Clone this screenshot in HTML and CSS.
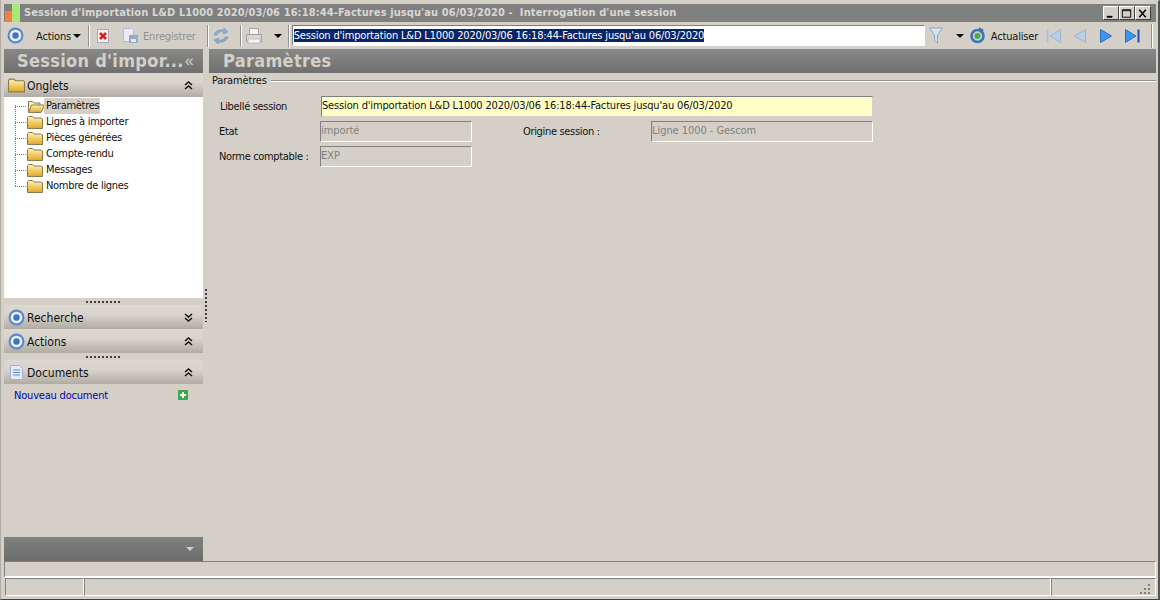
FILE: index.html
```html
<!DOCTYPE html>
<html lang="fr">
<head>
<meta charset="utf-8">
<title>Interrogation d'une session</title>
<link rel="stylesheet" href="styles.css">
</head>
<body>
<svg class="defs" width="0" height="0" aria-hidden="true">
  <defs>
    <linearGradient id="fold" x1="0" y1="0" x2="0" y2="1"><stop offset="0" stop-color="#fff3b8"/><stop offset="1" stop-color="#e0a820"/></linearGradient>
    <symbol id="folder" viewBox="0 0 16 13"><path d="M.5 12.500V1.500l1-1h4l1.500 1.500h7.500l1 1v9.500z" fill="url(#fold)" stroke="#8a7a50"/></symbol>
    <symbol id="folder-open" viewBox="0 0 18 13"><path d="M1.500 12.500V1.500h4l1.500 1.500h6v2" fill="#fff0b0" stroke="#8a7a50"/><path d="M1.500 12.500l3-7.500h13l-3.500 7.500z" fill="url(#fold)" stroke="#8a7a50"/></symbol>
    <symbol id="target" viewBox="0 0 16 16"><circle cx="8" cy="8" r="6.500" fill="#e8eefa" stroke="#5a88cc" stroke-width="2"/><circle cx="8" cy="8" r="3" fill="#3f72c8"/></symbol>
    <symbol id="updown" viewBox="0 0 9 9"><path d="M1 4l3.500-3L8 4M1 8l3.500-3L8 8" fill="none" stroke="#111" stroke-width="1.500"/></symbol>
    <symbol id="downdown" viewBox="0 0 9 9"><path d="M1 1l3.500 3L8 1M1 5l3.500 3L8 5" fill="none" stroke="#111" stroke-width="1.500"/></symbol>
  </defs>
</svg>
<div class="window">
  <header class="titlebar">
    <svg class="app-icon" width="18" height="18" viewBox="0 0 18 18"><rect width="18" height="18" fill="#808080"/><rect x="1" y="7" width="8" height="11" fill="#f08040"/><rect x="8" y="0" width="8" height="18" fill="#a8e878"/></svg>
    <span class="title-text">Session d'importation L&amp;D L1000 2020/03/06 16:18:44-Factures jusqu'au 06/03/2020 -&nbsp; Interrogation d'une session</span>
    <div class="win-btns">
      <span class="win-btn"><svg width="15" height="13" viewBox="0 0 15 13"><rect x="3" y="9" width="6" height="2" fill="#000"/></svg></span>
      <span class="win-btn"><svg width="15" height="13" viewBox="0 0 15 13"><path d="M2.500 2.500h9v8h-9zM2.500 3.500h9" fill="none" stroke="#000"/></svg></span>
      <span class="win-btn"><svg width="15" height="13" viewBox="0 0 15 13"><path d="M3.500 2.500l7 8M10.500 2.500l-7 8" stroke="#000" stroke-width="1.600"/></svg></span>
    </div>
  </header>

  <nav class="toolbar">
    <svg class="tb-target" width="17" height="17"><use href="#target"/></svg>
    <span class="tb-actions">Actions</span><span class="caret"></span>
    <span class="sep sep-a"></span>
    <svg class="tb-close" width="16" height="16" viewBox="0 0 16 16"><path d="M2.500 1.500h11v13h-11z" fill="#f4f0f0" stroke="#a8a8b8"/><path d="M5 5l6 6M11 5l-6 6" stroke="#d82020" stroke-width="2.600"/></svg>
    <svg class="tb-save" width="17" height="17" viewBox="0 0 17 17"><path d="M1.500 1.500h8l2 2v11h-10z" fill="#e8ecf6" stroke="#b4bccc"/><rect x="7" y="8" width="9" height="8" fill="#9aa8c8"/><rect x="9" y="12" width="5" height="3" fill="#e4e8f0"/></svg>
    <span class="tb-disabled">Enregistrer</span>
    <span class="sep sep-c"></span>
    <svg class="tb-sync" width="18" height="18" viewBox="0 0 18 18"><path d="M2 8q2-6 9-5l1-2 4 4-5 2 1-2q-5-1-7 3z" fill="#8fb0d8" stroke="#7088a8" stroke-width=".5"/><path d="M16 10q-2 6-9 5l-1 2-4-4 5-2-1 2q5 1 7-3z" fill="#88a8cc" stroke="#7088a8" stroke-width=".5"/></svg>
    <span class="sep sep-d"></span>
    <svg class="tb-print" width="18" height="18" viewBox="0 0 18 18"><path d="M4.500 1.500h9v6h-9z" fill="#f4f4f4" stroke="#a8a8a8"/><path d="M1.500 7.500h15v7h-15z" fill="#d8d8d8" stroke="#a0a0a0"/><rect x="3" y="12" width="12" height="4" fill="#f4f4f4" stroke="#a8a8a8" stroke-width=".6"/></svg>
    <span class="caret caret-print"></span>
    <span class="sep sep-e"></span>
    <div class="search-box"><span class="selected">Session d'importation L&amp;D L1000 2020/03/06 16:18:44-Factures jusqu'au 06/03/2020</span></div>
    <svg class="tb-filter" width="14" height="17" viewBox="0 0 14 17"><path d="M.5 1h13L8.500 8v8l-3-2.500V8z" fill="#d8e2ee" stroke="#8fa8c8"/></svg>
    <span class="caret caret-filter"></span>
    <svg class="tb-refresh" width="17" height="17" viewBox="0 0 17 17"><circle cx="8.500" cy="9" r="6" fill="none" stroke="#3f72b8" stroke-width="2.600"/><circle cx="8.500" cy="9" r="3" fill="#40b040"/><path d="M10 0l5 3-4 3z" fill="#3f72b8"/></svg>
    <span class="tb-refresh-label">Actualiser</span>
    <svg class="nav-icon nav-first" width="16" height="16" viewBox="0 0 16 16"><path d="M1.500 1.500v13" stroke="#a8c0dc" stroke-width="2"/><path d="M14.500 1.500v13L4 8z" fill="#b8cfe8" stroke="#98b4d4"/></svg>
    <svg class="nav-icon nav-prev" width="14" height="16" viewBox="0 0 14 16"><path d="M12.500 1.500v13L1.500 8z" fill="#b8cfe8" stroke="#98b4d4"/></svg>
    <svg class="nav-icon nav-next" width="14" height="16" viewBox="0 0 14 16"><path d="M1.500 1.500v13L12.500 8z" fill="#3d96f0" stroke="#2c6cc0"/></svg>
    <svg class="nav-icon nav-last" width="16" height="16" viewBox="0 0 16 16"><path d="M14.500 1.500v13" stroke="#1c50b0" stroke-width="2"/><path d="M1.500 1.500v13L12 8z" fill="#3d96f0" stroke="#2c6cc0"/></svg>
    <span class="sep sep-end"></span>
  </nav>

  <div class="workspace">
    <aside class="side">
      <div class="banner side-banner"><span class="banner-text">Session d'impor...</span><span class="collapse">«</span></div>

      <div class="panel-head">
        <svg class="ph-icon" width="17" height="15"><use href="#folder"/></svg>
        <span class="ph-label">Onglets</span>
        <svg class="ph-chev" width="9" height="9"><use href="#updown"/></svg>
      </div>
      <ul class="tree">
        <li class="tree-item"><svg class="tree-folder" width="18" height="13"><use href="#folder-open"/></svg><span class="tree-label active">Paramètres</span></li>
        <li class="tree-item"><svg class="tree-folder" width="16" height="13"><use href="#folder"/></svg><span class="tree-label">Lignes à importer</span></li>
        <li class="tree-item"><svg class="tree-folder" width="16" height="13"><use href="#folder"/></svg><span class="tree-label">Pièces générées</span></li>
        <li class="tree-item"><svg class="tree-folder" width="16" height="13"><use href="#folder"/></svg><span class="tree-label">Compte-rendu</span></li>
        <li class="tree-item"><svg class="tree-folder" width="16" height="13"><use href="#folder"/></svg><span class="tree-label">Messages</span></li>
        <li class="tree-item"><svg class="tree-folder" width="16" height="13"><use href="#folder"/></svg><span class="tree-label">Nombre de lignes</span></li>
      </ul>
      <div class="grip"><span class="grip-dots"></span></div>
      <div class="panel-head">
        <svg class="ph-icon" width="17" height="17"><use href="#target"/></svg>
        <span class="ph-label">Recherche</span>
        <svg class="ph-chev" width="9" height="9"><use href="#downdown"/></svg>
      </div>
      <div class="panel-head">
        <svg class="ph-icon" width="17" height="17"><use href="#target"/></svg>
        <span class="ph-label">Actions</span>
        <svg class="ph-chev" width="9" height="9"><use href="#updown"/></svg>
      </div>
      <div class="grip"><span class="grip-dots"></span></div>
      <div class="panel-head">
        <svg class="ph-icon" width="17" height="17" viewBox="0 0 17 17"><path d="M2.500 1.500h9l3 3v11h-12z" fill="#e4ecfa" stroke="#9cb0d8"/><path d="M5 6h7M5 8.500h7M5 11h7" stroke="#6888c8"/></svg>
        <span class="ph-label">Documents</span>
        <svg class="ph-chev" width="9" height="9"><use href="#updown"/></svg>
      </div>
      <div class="doc-row">
        <a class="doc-link">Nouveau document</a>
        <svg class="doc-add" width="10" height="10" viewBox="0 0 10 10"><rect width="10" height="10" rx="1" fill="#38a848"/><path d="M5 2v6M2 5h6" stroke="#fff" stroke-width="2"/></svg>
      </div>
      <div class="side-spacer"></div>
      <div class="side-foot"><span class="foot-caret"></span></div>
    </aside>

    <div class="splitter"><span class="splitter-dots"></span></div>

    <main class="main">
      <div class="banner main-banner"><span class="banner-text">Paramètres</span></div>
      <div class="legend-row"><span class="legend">Paramètres</span><span class="legend-line"></span></div>
      <form class="form">
        <label class="lbl lbl-first">Libellé session</label>
        <div class="field field-edit wide">Session d'importation L&amp;D L1000 2020/03/06 16:18:44-Factures jusqu'au 06/03/2020</div>
        <label class="lbl">Etat</label>
        <div class="field field-ro">importé</div>
        <label class="lbl lbl-origin">Origine session :</label>
        <div class="field field-ro">Ligne 1000 - Gescom</div>
        <label class="lbl">Norme comptable :</label>
        <div class="field field-ro">EXP</div>
      </form>
    </main>
  </div>

  <div class="hbar"></div>
  <footer class="statusbar">
    <span class="cell cell-a"></span>
    <span class="cell cell-b"></span>
    <span class="cell cell-c">
      <svg class="sizer" width="11" height="11" viewBox="0 0 11 11"><path d="M8 1h2v2H8zM8 5h2v2H8zM4 5h2v2H4zM8 9h2v2H8zM4 9h2v2H4zM0 9h2v2H0z" fill="#808080"/></svg>
    </span>
  </footer>
</div>
</body>
</html>
```
FILE: styles.css
```css
* { box-sizing: border-box; }
html, body { margin: 0; padding: 0; }
body { width: 1160px; height: 600px; overflow: hidden; background: #d4d0c8; font: 11px/13px "DejaVu Sans Condensed", "Liberation Sans", sans-serif; letter-spacing: -.16px; color: #111; }
.defs { position: absolute; }
.window { width: 1160px; height: 600px; display: flex; flex-direction: column; padding: 4px 2px 3px 3px; border-top: 1px solid #d4d0c8; border-left: 1px solid #b0aca4; border-right: 2px solid #555; border-bottom: 1px solid #404040; background: #d4d0c8; }

.titlebar { height: 18px; margin-top: -1px; background: #808080; display: flex; align-items: center; flex: none; padding-right: 1px; }
.app-icon { flex: none; }
.title-text { margin-left: 2px; color: #d8d8d4; font: bold 11px/16px "DejaVu Sans Condensed", sans-serif; letter-spacing: .1px; white-space: nowrap; }
.win-btns { margin-left: auto; display: flex; gap: 0; margin-right: 4px; }
.win-btn { width: 16px; height: 14px; display: flex; background: #d4d0c8; border: 1px solid; border-color: #fff #404040 #404040 #fff; }

.toolbar { height: 27px; flex: none; display: flex; align-items: center; padding-left: 2px; color: #111; }
.tb-target { margin-left: 1px; flex: none; }
.tb-actions { margin-left: 12px; padding-top: 2px; }
.caret { width: 0; height: 0; border: 4px solid transparent; border-top: 4px solid #000; border-bottom: 0; margin-left: 2px; flex: none; }
.sep { width: 2px; height: 22px; flex: none; border-left: 1px solid #909090; border-right: 1px solid #fff; }
.sep-a { margin-left: 7px; }
.tb-close { margin-left: 5px; flex: none; }
.tb-save { margin-left: 11px; flex: none; }
.tb-disabled { margin-left: 4px; padding-top: 2px; color: #909090; }
.sep-c { margin-left: 11px; }
.tb-sync { margin-left: 3px; flex: none; }
.sep-d { margin-left: 10px; }
.tb-print { margin-left: 3px; flex: none; }
.caret-print { margin-left: 11px; }
.sep-e { margin-left: 6px; }
.search-box { width: 633px; height: 21px; margin-left: 2px; background: #fff; border: 1px solid; border-color: #808080 #fff #fff #808080; padding: 3px 0 0 1px; line-height: 13px; white-space: nowrap; flex: none; }
.selected { background: #0a246a; color: #fff; display: inline-block; }
.tb-filter { margin-left: 4px; flex: none; }
.caret-filter { margin-left: 13px; }
.tb-refresh { margin-left: 5px; flex: none; }
.tb-refresh-label { margin-left: 5px; padding-top: 2px; }
.nav-icon { flex: none; }
.nav-first { margin-left: 8px; }
.nav-prev { margin-left: 11px; }
.nav-next { margin-left: 12px; }
.nav-last { margin-left: 11px; }
.sep-end { margin-left: 11px; height: 24px; }

.workspace { height: 512px; flex: none; display: flex; }
.side { width: 199px; flex: none; display: flex; flex-direction: column; }
.banner { height: 24px; flex: none; display: flex; align-items: center; background: linear-gradient(#888 0%, #6f6f6f 100%); color: #d4d0c8; font: bold 18px/24px "DejaVu Sans Condensed", sans-serif; letter-spacing: .3px; white-space: nowrap; overflow: hidden; }
.side-banner { padding-left: 13px; }
.collapse { margin-left: 1px; font: 16px/20px "Liberation Sans", sans-serif; }
.main-banner { padding-left: 14px; }

.panel-head { height: 24px; flex: none; display: flex; align-items: center; padding-left: 4px; background: linear-gradient(#dcd8d0 0%, #d8d4cc 40%, #b0aca4 100%); }
.ph-icon { flex: none; }
.ph-label { margin-left: 2px; padding-top: 2px; font: 12px/14px "DejaVu Sans Condensed", sans-serif; letter-spacing: 0; }
.ph-chev { margin-left: auto; margin-right: 10px; flex: none; }

.tree { height: 201px; flex: none; margin: 0; padding: 1px 0 0; list-style: none; background: #fff; position: relative; letter-spacing: -.3px; }
.tree::before { content: ""; position: absolute; left: 11px; top: 8px; height: 81px; border-left: 1px dotted #808080; }
.tree-item { height: 16px; display: flex; align-items: center; padding-left: 23px; position: relative; }
.tree-item::before { content: ""; position: absolute; left: 11px; top: 8px; width: 11px; border-top: 1px dotted #808080; }
.tree-folder { flex: none; }
.tree-label { position: absolute; left: 42px; top: 0; padding: 0 1px 0 0; line-height: 16px; white-space: nowrap; }
.tree-label.active { background: #d4d0c8; left: 40px; padding: 0 1px 0 2px; }

.grip { height: 7px; flex: none; display: flex; align-items: center; justify-content: center; background: #d4d0c8; }
.grip-dots { width: 36px; height: 2px; background: repeating-linear-gradient(90deg, #404040 0 2px, transparent 2px 4px); }

.doc-row { height: 21px; flex: none; display: flex; align-items: center; padding: 1px 15px 0 10px; letter-spacing: -.2px; }
.doc-link { color: #0000b0; }
.doc-add { margin-left: auto; flex: none; }
.side-spacer { flex: 1; }
.side-foot { height: 24px; flex: none; background: linear-gradient(#808080, #6c6c6c); display: flex; align-items: center; justify-content: flex-end; padding-right: 9px; }
.foot-caret { width: 0; height: 0; border: 4px solid transparent; border-top: 4px solid #d4d0c8; border-bottom: 0; }

.splitter { width: 6px; flex: none; position: relative; }
.splitter-dots { position: absolute; left: 2px; top: 240px; width: 2px; height: 33px; background: repeating-linear-gradient(#404040 0 2px, transparent 2px 4px); }

.main { flex: 1; min-width: 0; display: flex; flex-direction: column; }
.legend-row { display: flex; align-items: center; height: 15px; padding-left: 3px; flex: none; }
.legend-line { flex: 1; height: 2px; margin-left: 4px; border-top: 1px solid #909090; border-bottom: 1px solid #fff; }

.form { display: grid; grid-template-columns: 100px 152px 51px 128px 222px; grid-template-rows: 21px 21px 21px; row-gap: 4px; align-items: center; margin: 8px 0 0 11px; }
.lbl { white-space: nowrap; letter-spacing: -.33px; margin-left: -1px; }
.lbl-first { margin-left: 0; }
.lbl-origin { grid-column: 3 / 5; padding-left: 52px; }
.field { height: 100%; white-space: nowrap; border: 1px solid; padding: 2px 0 0; }
.field-edit { background: #ffffc8; border-color: #808080 #d4d0c8 #d4d0c8 #808080; margin-left: 1px; }
.wide { grid-column: 2 / 6; }
.field-ro { color: #808080; border-color: #808080 #fff #fff #808080; letter-spacing: -.05px; }

.hbar { height: 17px; flex: none; border-top: 1px solid #808080; border-left: 1px solid #808080; border-bottom: 2px solid #fff; border-right: 1px solid #fff; }
.statusbar { height: 18px; flex: none; display: flex; }
.cell { border: 1px solid; border-color: #808080 #fff #fff #808080; flex: none; height: 100%; }
.cell-a { width: 79px; margin-left: 1px; }
.cell-b { width: 967px; }
.cell-c { flex: 1; position: relative; }
.sizer { position: absolute; right: 4px; bottom: 1px; }
```
